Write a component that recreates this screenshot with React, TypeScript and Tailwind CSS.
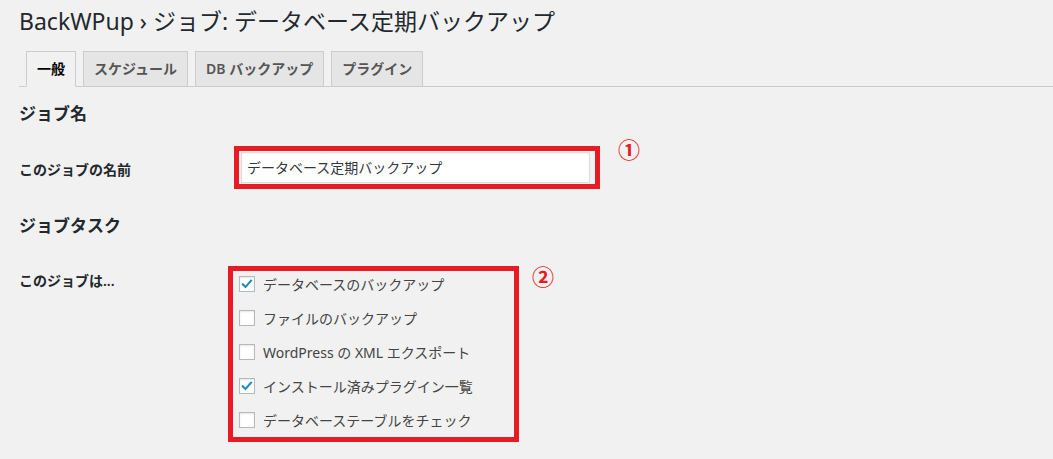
import React from "react";

const TABS = [
  { label: "一般", active: true },
  { label: "スケジュール", active: false },
  { label: "DB バックアップ", active: false },
  { label: "プラグイン", active: false },
];

const TASKS = [
  { label: "データベースのバックアップ", checked: true },
  { label: "ファイルのバックアップ", checked: false },
  { label: "WordPress の XML エクスポート", checked: false },
  { label: "インストール済みプラグイン一覧", checked: true },
  { label: "データベーステーブルをチェック", checked: false },
];

function Checkbox({ checked }: { checked: boolean }) {
  return (
    <span className="w-4 h-4 flex-shrink-0 bg-white border border-[#b4b9be] shadow-[inset_0_1px_2px_rgba(0,0,0,0.1)] flex items-center justify-center">
      {checked && (
        <svg viewBox="0 0 16 16" className="w-[14px] h-[14px]">
          <path d="M3.2 8.2 L6.3 11.3 L12.6 4.2" fill="none" stroke="#1e8cbe" strokeWidth="2.4" strokeLinecap="square" />
        </svg>
      )}
    </span>
  );
}

export default function App() {
  return (
    <div className="w-[1053px] h-[459px] overflow-hidden bg-[#f1f1f1] text-[#23282d] font-['Noto_Sans','Noto_Sans_CJK_JP',sans-serif]">
      {/* Title */}
      <h1 className="pl-[19px] pt-[7px] text-[23px] leading-[29px] font-normal">
        BackWPup › ジョブ: データベース定期バックアップ
      </h1>

      {/* Tabs */}
      <div className="ml-[19px] mt-[15px] border-b border-[#ccc] flex">
        {TABS.map((t) => (
          <div
            key={t.label}
            className={`ml-[7px] first:ml-[7px] -mb-px px-[10px] py-[5px] text-[14px] leading-[24px] font-semibold border border-[#ccc] ${
              t.active ? "bg-[#f1f1f1] border-b-[#f1f1f1] text-black" : "bg-[#e5e5e5] text-[#555]"
            }`}
          >
            {t.label}
          </div>
        ))}
      </div>

      <div className="pl-[19px]">
        {/* Job name */}
        <h2 className="mt-[15px] text-[17px] leading-[24px] font-bold">ジョブ名</h2>
        <div className="mt-[20px] flex items-start">
          <div className="w-[215px] mt-[14px] text-[14px] leading-[20px] font-semibold">このジョブの名前</div>
          <div className="border-[5px] border-[#e61b23] pl-[2px] pt-[1px] pr-[5px] pb-[1px]">
            <div className="w-[349px] h-[31px] bg-white border border-[#ddd] shadow-[inset_0_1px_2px_rgba(0,0,0,0.07)] pl-[5px] flex items-center text-[14px] text-[#32373c]">
              データベース定期バックアップ
            </div>
          </div>
          <span className="ml-[18px] -mt-[10px] text-[22px] leading-[26px] font-bold text-[#e61b23]">①</span>
        </div>

        {/* Job tasks */}
        <h2 className="mt-[25px] text-[17px] leading-[24px] font-bold">ジョブタスク</h2>
        <div className="mt-[28px] flex items-start">
          <div className="w-[209px] mt-[5px] text-[14px] leading-[20px] font-semibold">このジョブは...</div>
          <div className="w-[291px] border-[5px] border-[#e61b23] pl-[6px] pt-[1px] pb-[5px] flex flex-col gap-[10px]">
            {TASKS.map((t) => (
              <label key={t.label} className="h-[24px] flex items-center gap-[8px] text-[14px] text-[#444]">
                <Checkbox checked={t.checked} />
                <span>{t.label}</span>
              </label>
            ))}
          </div>
          <span className="ml-[13px] -mt-[3px] text-[22px] leading-[26px] font-bold text-[#e61b23]">②</span>
        </div>
      </div>
    </div>
  );
}
